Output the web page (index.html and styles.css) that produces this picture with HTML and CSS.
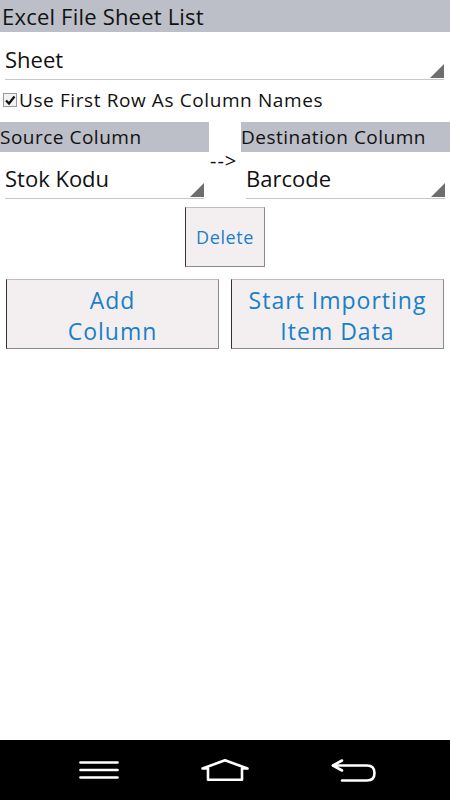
FILE: index.html
```html
<!DOCTYPE html>
<html>
<head lang="en">
    <meta charset="UTF-8">
    <title>Excel Import</title>
    <link rel="stylesheet" href="styles.css">
</head>
<body>
    <div class="app">
        <div class="content">
            <div class="title">Excel File Sheet List</div>

            <div class="spinner sheet">
                <span class="value">Sheet</span>
                <span class="corner"></span>
            </div>

            <label class="check">
                <span class="box">
                    <svg width="12" height="12" viewBox="0 0 12 12">
                        <path d="M2 6.5 L5 9.5 L10.5 2.5" fill="none" stroke="#111" stroke-width="2.2"/>
                    </svg>
                </span>
                Use First Row As Column Names
            </label>

            <div class="map">
                <div class="col">
                    <div class="label">Source Column</div>
                    <div class="spinner">
                        <span class="value">Stok Kodu</span>
                        <span class="corner"></span>
                    </div>
                </div>
                <div class="arrow">--&gt;</div>
                <div class="col">
                    <div class="label">Destination Column</div>
                    <div class="spinner">
                        <span class="value">Barcode</span>
                        <span class="corner"></span>
                    </div>
                </div>
            </div>

            <div class="delete-row">
                <button class="btn delete">Delete</button>
            </div>

            <div class="actions">
                <button class="btn big">Add<br>Column</button>
                <button class="btn big">Start Importing<br>Item Data</button>
            </div>
        </div>

        <!--导航栏-->
        <div class="navbar">
            <svg width="40" height="20" viewBox="0 0 40 20">
                <g stroke="#fff" stroke-width="2.6" stroke-linecap="round">
                    <line x1="1.5" y1="2.5" x2="38.5" y2="2.5"/>
                    <line x1="1.5" y1="10" x2="38.5" y2="10"/>
                    <line x1="1.5" y1="17.5" x2="38.5" y2="17.5"/>
                </g>
            </svg>
            <svg width="48" height="22" viewBox="0 0 48 22">
                <path d="M1.5 9.5 L24 1.3 L46.5 9.5 L41 9.5 L41 20.7 L7 20.7 L7 9.5 Z" fill="none" stroke="#fff" stroke-width="2.6" stroke-linejoin="round"/>
            </svg>
            <svg width="46" height="23" viewBox="0 0 46 23">
                <path d="M11 1.5 L2 6.5 L11 11.5" fill="none" stroke="#fff" stroke-width="2.6" stroke-linecap="round" stroke-linejoin="round"/>
                <path d="M2 6.5 L36 6.5 Q43.5 6.5 43.5 14 Q43.5 21.5 36 21.5 L11 21.5" fill="none" stroke="#fff" stroke-width="2.6" stroke-linecap="round"/>
            </svg>
        </div>
    </div>
</body>
</html>
```

FILE: styles.css
```css
* {
    margin: 0;
    padding: 0;
    box-sizing: border-box;
}

body {
    font-family: "Open Sans", "DejaVu Sans", sans-serif;
    color: #111;
    background: #fff;
}

.app {
    width: 450px;
    height: 800px;
    display: flex;
    flex-direction: column;
}

.content {
    flex: 1;
}

.title {
    height: 32px;
    background: #bcbfc8;
    font-size: 22px;
    letter-spacing: 0.2px;
    line-height: 32px;
    padding-left: 2px;
}

.spinner {
    height: 48px;
    margin: 0 6px 0 5px;
    border-bottom: 1px solid #c8c8c8;
    display: flex;
    align-items: flex-end;
    justify-content: space-between;
}

.spinner .value {
    font-size: 22px;
    line-height: 30px;
    padding-bottom: 5px;
}

.spinner .corner {
    width: 0;
    height: 0;
    margin-bottom: 1px;
    border-left: 14px solid transparent;
    border-bottom: 14px solid #6e6e6e;
}

.check {
    display: flex;
    align-items: center;
    height: 42px;
    padding: 0 0 2px 3px;
    font-size: 19px;
    letter-spacing: 0.6px;
}

.check .box {
    width: 14px;
    height: 14px;
    border: 1px solid #999;
    background: #f2f2f2;
    display: flex;
    align-items: center;
    justify-content: center;
    margin-right: 2px;
}

.map {
    display: flex;
}

.col {
    flex: 1;
}

.label {
    height: 30px;
    background: #bcbfc8;
    font-size: 19px;
    letter-spacing: 0.5px;
    line-height: 30px;
}

.map .spinner {
    margin-right: 5px;
    height: 47px;
}

.arrow {
    width: 32px;
    padding: 29px 0 0 1px;
    font-size: 20px;
    letter-spacing: 1px;
    line-height: 20px;
}

.delete-row {
    display: flex;
    justify-content: center;
    padding: 8px 0 12px;
}

.btn {
    font-family: inherit;
    background: #f3eff0;
    color: #1a7fc8;
    border: 1px solid #8a8a8a;
    border-top-color: #bdbdbd;
    border-left-color: #333;
    cursor: pointer;
}

.delete {
    width: 80px;
    height: 60px;
    font-size: 18px;
    letter-spacing: 0.6px;
}

.actions {
    display: flex;
    gap: 12px;
    padding: 0 6px;
}

.big {
    flex: 1;
    height: 70px;
    padding-top: 4px;
    font-size: 23px;
    letter-spacing: 1px;
    line-height: 31px;
}

.navbar {
    height: 60px;
    background: #000;
    display: flex;
    align-items: center;
    gap: 82px;
    padding-left: 79px;
}
```
